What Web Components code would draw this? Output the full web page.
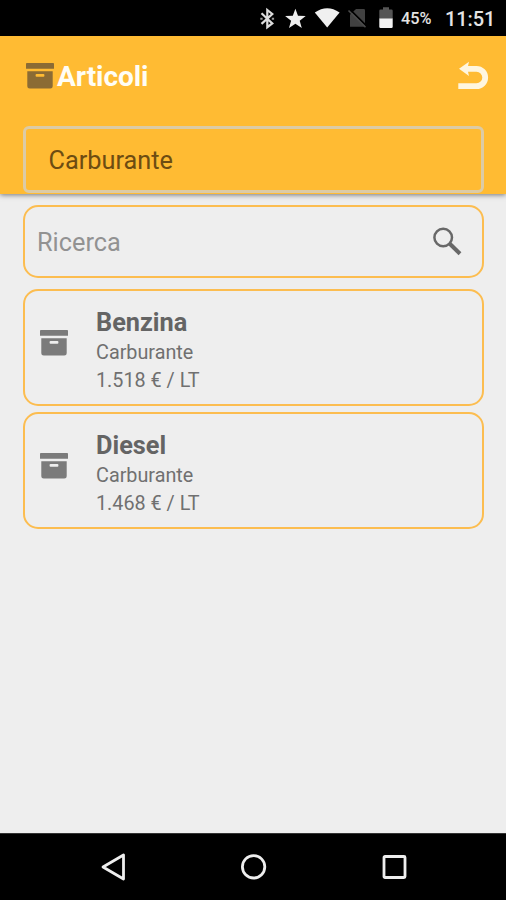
<!DOCTYPE html>
<html lang="it">
<head>
<meta charset="utf-8">
<title>Articoli</title>
<style>
html,body{margin:0;height:100%;background:#eee;font-family:Roboto,"Noto Sans",sans-serif;overflow:hidden}
</style>
</head>
<body>
<articles-app></articles-app>
<script>
const define = (name, html) => customElements.define(name, class extends HTMLElement {
  constructor() {
    super();
    const t = document.createElement('template');
    t.innerHTML = '<style>*{box-sizing:border-box}:host{box-sizing:border-box}svg{display:block;overflow:visible}</style>' + html;
    this.attachShadow({mode: 'open'}).append(t.content.cloneNode(true));
  }
});

define('archive-icon', `
<style>:host{display:block;width:28px;height:26px}</style>
<svg width="28" height="26" viewBox="0 0 28 26" fill="currentColor">
<path d="M.8 0H27.2Q28 0 28 .8V5.7H0V.8Q0 0 .8 0Z"/>
<path fill-rule="evenodd" d="M1.3 8.3H26.7V23.2Q26.7 25.6 24.3 25.6H3.7Q1.3 25.6 1.3 23.2ZM10.5 11Q9.6 11 9.6 12V12.8Q9.6 13.7 10.5 13.7H17.5Q18.4 13.7 18.4 12.8V12Q18.4 11 17.5 11Z"/>
</svg>`);

define('status-bar', `
<style>
:host{display:block;height:36px;background:#000;color:#e4e4e4;flex:none}
.row{display:flex;height:36px;align-items:center;padding-left:260px}
svg{flex:none}
.pct{font-size:16.3px;font-weight:500;width:31px;margin-left:8px;line-height:20px;padding-top:2px;white-space:nowrap}
.time{font-size:20px;font-weight:500;letter-spacing:-.1px;margin-left:13px;line-height:24px;padding-top:2px;white-space:nowrap}
</style>
<div class="row">
<svg width="133" height="36" viewBox="260 0 133 36">
<path d="M261.5 13.3L272.3 23.4L267.3 27.2V10L272.3 14L261.5 23.9" fill="none" stroke="#ddd" stroke-width="2.2"/>
<path d="M260.3 18.7h2.3M271.8 18.7h2.3" stroke="#999" stroke-width="2"/>
<path fill="#eee" d="M295.4 8.7L298 15.7L305.7 16L299.7 20.7L301.8 28L295.4 23.8L289 28L291.1 20.7L285.1 16L292.8 15.7Z"/>
<path fill="#f0f0f0" d="M314.8 12.6Q327.2 3.8 339.6 12.6L327.2 27.5Z"/>
<path fill="#414141" d="M356 9H363.8Q365 9 365 10.2V26.8H350V14.8Z"/>
<path d="M349.8 9.4L366.5 25.8" stroke="#000" stroke-width="1.8"/><path d="M348.5 10.5L365.5 27.2" stroke="#4b4b4b" stroke-width="1.6"/>
<path fill="#555" d="M383 7.2h6v2.3h2.4q1.3 0 1.3 1.3V19H379.3V10.8q0-1.3 1.3-1.3H383Z"/>
<path fill="#f2f2f2" d="M379.3 18.6h13.4v8.2q0 1.2-1.2 1.2h-11q-1.2 0-1.2-1.2Z"/>
</svg>
<span class="pct">45%</span><span class="time">11:51</span>
</div>`);

define('app-header', `
<style>
:host{display:block;height:158px;flex:none;background:#ffbb33;box-shadow:0 1px 5px rgba(0,0,0,.5);padding:0 22px 0 23px;position:relative}
.bar{display:flex;height:90px;align-items:flex-start}
archive-icon{color:#8b6b34;margin:27px 0 0 3px}
h1{margin:0 0 0 3px;font-size:28px;font-weight:700;letter-spacing:-.05px;line-height:32px;padding-top:25px;color:#fffdf5;flex:1}
.back{margin:26px -4px 0 0}
</style>
<div class="bar"><archive-icon></archive-icon><h1>Articoli</h1>
<svg class="back" width="30" height="28" viewBox="0 0 30 28"><path d="M8 6.8H18.5A8.7 8.7 0 0 1 18.5 24.2H.3" fill="none" stroke="#fff6df" stroke-width="5.8"/><path fill="#fff6df" d="M1 6.8L11 -.2L10 4V9.8L11 14Z"/></svg></div>
<slot></slot>`);

define('category-box', `
<style>:host{display:block;height:67px;border:3px solid #dccba6;border-radius:6px;padding:16px 22.5px;font-size:25.3px;line-height:32px;color:#6d4c12}</style>
<slot></slot>`);

define('search-box', `
<style>:host{display:flex;height:73px;border:2px solid #fcbd50;border-radius:15px;padding:2px 20px 0 12px;align-items:center;justify-content:space-between;font-size:25.3px;line-height:32px;color:#929292}
svg{margin-bottom:4px}</style>
<slot></slot>
<svg width="30" height="30" viewBox="0 0 30 30" fill="none" stroke="#686868"><circle cx="11.2" cy="11.5" r="8.8" stroke-width="2.5"/><path d="M17.5 17.5L28 27.8" stroke-width="4"/></svg>`);

define('article-card', `
<style>
:host{display:flex;height:117px;border:2px solid #fcbd50;border-radius:15px;padding-left:15px}
archive-icon{color:#7b7b7b;margin-top:39px}
.text{margin-left:28px;padding-top:16px;color:#707070;font-size:19.8px;line-height:27.5px}
.name{font-size:25.3px;font-weight:700;line-height:32px;color:#646464}
</style>
<archive-icon></archive-icon>
<div class="text"><div class="name"><slot name="name"></slot></div><div><slot name="category"></slot></div><div><slot name="price"></slot></div></div>`);

define('nav-bar', `
<style>:host{display:flex;height:67px;flex:none;background:#000;align-items:center;justify-content:space-between;padding:0 99px 0 101px;border-top:1px solid #333}</style>
<svg width="25" height="28" viewBox="0 0 25 28"><path d="M2 14L22.5 2V26Z" fill="none" stroke="#eee" stroke-width="2.8" stroke-linejoin="round"/></svg>
<svg width="26" height="26" viewBox="0 0 26 26"><circle cx="12.6" cy="12.8" r="11.2" fill="none" stroke="#eee" stroke-width="2.8"/></svg>
<svg width="25" height="25" viewBox="0 0 25 25"><rect x="2" y="1.5" width="21" height="21" rx="1" fill="none" stroke="#eee" stroke-width="2.8"/></svg>`);

define('articles-app', `
<style>
:host{display:flex;flex-direction:column;width:506px;height:900px;background:#eee}
main{flex:1;padding:11px 22px 0 23px}
article-card{margin-bottom:6px}
search-box{margin-bottom:11px}
</style>
<status-bar></status-bar>
<app-header><category-box>Carburante</category-box></app-header>
<main>
<search-box>Ricerca</search-box>
<article-card><span slot="name">Benzina</span><span slot="category">Carburante</span><span slot="price">1.518 € / LT</span></article-card>
<article-card><span slot="name">Diesel</span><span slot="category">Carburante</span><span slot="price">1.468 € / LT</span></article-card>
</main>
<nav-bar></nav-bar>`);
</script>
</body>
</html>
